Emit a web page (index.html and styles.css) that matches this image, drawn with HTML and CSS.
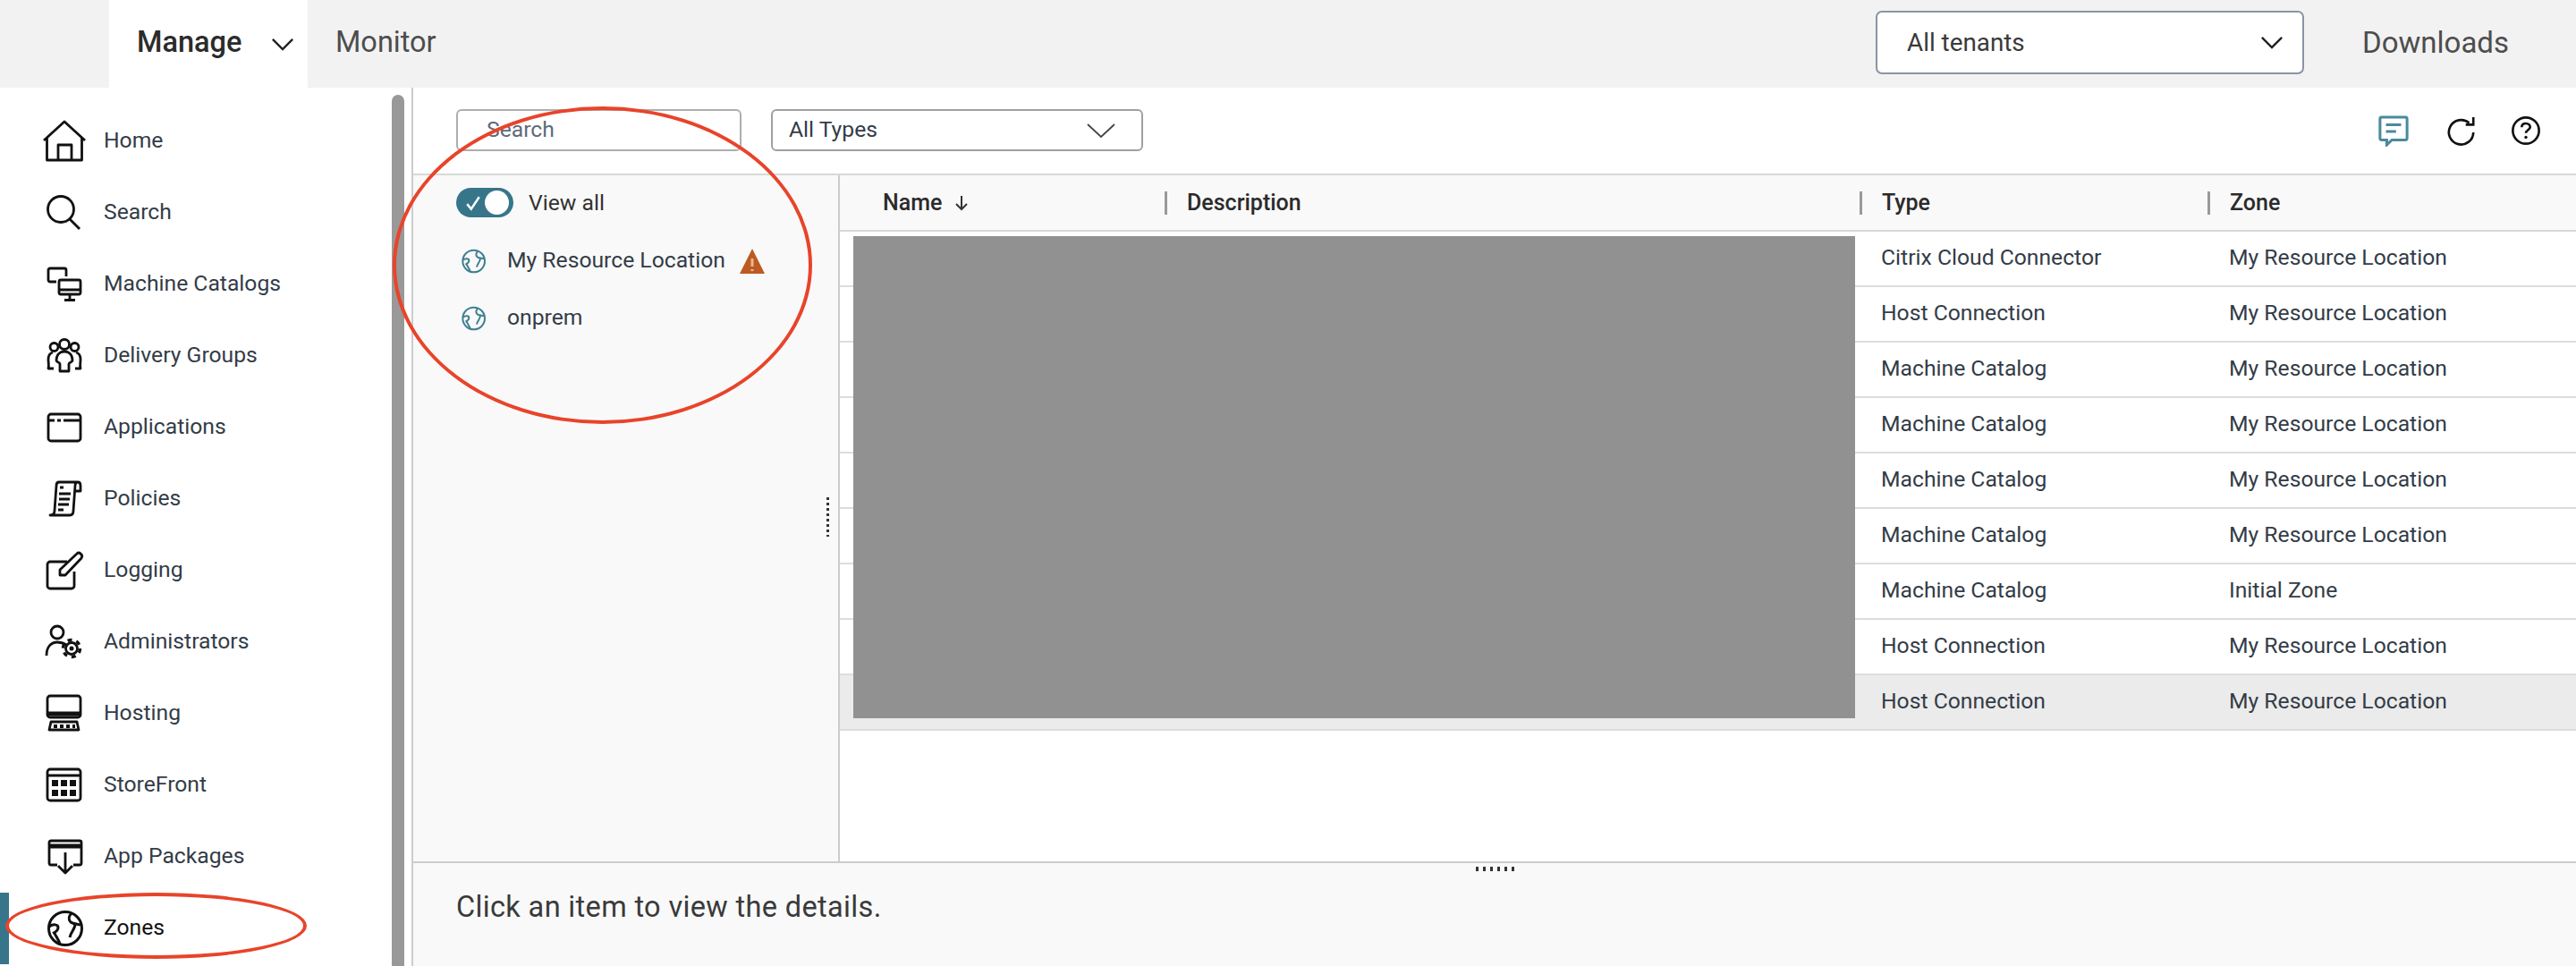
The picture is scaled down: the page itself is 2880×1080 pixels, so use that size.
FILE: index.html
```html
<!DOCTYPE html>
<html lang="en">
<head>
<meta charset="utf-8">
<title>Zones</title>
<link rel="stylesheet" href="styles.css">
</head>
<body>
<svg class="defs" width="0" height="0" aria-hidden="true">
  <symbol id="globe" viewBox="0 0 48 48">
    <circle cx="25" cy="24" r="18.500"/>
    <path d="M7 22C11 19 17 19 17 23C17 27 14 28 11 29.500"/>
    <path d="M13 29C14 33 18 36 19 42"/>
    <path d="M32 7C29 10 28 14 31 17C34 19 38 19 42 20"/>
    <path d="M36 19C36 25 31 28 30 34"/>
  </symbol>
</svg>
<header class="topbar">
  <nav class="tabs">
    <div class="tab tab-active">
      <span>Manage</span>
      <svg class="chev" viewBox="0 0 28 16"><path d="M2 2L14 14L26 2"/></svg>
    </div>
    <div class="tab tab-plain">Monitor</div>
  </nav>
  <div class="topright">
    <div class="tenant">
      <span>All tenants</span>
      <svg class="chev chev-tenant" viewBox="0 0 28 16"><path d="M2 2L14 14L26 2"/></svg>
    </div>
    <div class="downloads">Downloads</div>
  </div>
</header>
<div class="body">
  <aside class="sidebar">
    <ul class="navlist">
      <li class="navitem">
        <svg class="navicon" viewBox="0 0 48 48"><path d="M1 23L24 2L47 23"/><path d="M4.500 20V45H43.500V20"/><path d="M17 45V28H32V45"/></svg>
        <span>Home</span>
      </li>
      <li class="navitem">
        <svg class="navicon" viewBox="0 0 48 48"><circle cx="20" cy="20" r="14.500"/><path d="M30 31L41 42"/></svg>
        <span>Search</span>
      </li>
      <li class="navitem">
        <svg class="navicon" viewBox="0 0 48 48"><path d="M15 21H8a2 2 0 0 1-2-2V8a2 2 0 0 1 2-2H24a2 2 0 0 1 2 2V15"/><rect x="18" y="19" width="24" height="16" rx="2"/><path d="M18 30H42M30 35V41M24 41.500H36"/></svg>
        <span>Machine Catalogs</span>
      </li>
      <li class="navitem">
        <svg class="navicon" viewBox="0 0 48 48"><circle cx="24" cy="11" r="5.500"/><circle cx="12.500" cy="14" r="4.500"/><circle cx="35.500" cy="14" r="4.500"/><path d="M15 29C15 22 19 19 24 19C29 19 33 22 33 29C33 31 29 31 29 33V41H19V33C19 31 15 31 15 29Z"/><path d="M11 20C7 21 6 24 6 28C6 32 7 35 6 38H12"/><path d="M37 20C41 21 42 24 42 28C42 32 41 35 42 38H36"/></svg>
        <span>Delivery Groups</span>
      </li>
      <li class="navitem">
        <svg class="navicon" viewBox="0 0 48 48"><rect x="6" y="9" width="36" height="30" rx="3"/><path d="M6 16H13M16 16H20M23 16H42"/></svg>
        <span>Applications</span>
      </li>
      <li class="navitem">
        <svg class="navicon" viewBox="0 0 48 48"><path d="M39 5H18C16 5 15 7 15 9L13 37C13 40 11 42 8 42H30C33 42 34 40 34 37L36 9C36 7 37 5 39 5C41 5 42 7 42 9V15H36"/><path d="M19 11H23M18 18H31M18 24H30M17 30H29M17 36H23"/></svg>
        <span>Policies</span>
      </li>
      <li class="navitem">
        <svg class="navicon" viewBox="0 0 48 48"><path d="M27 14H8a3 3 0 0 0-3 3V41a3 3 0 0 0 3 3H32a3 3 0 0 0 3-3V25"/><path d="M19 29V23L38 5Q40 3 42 5Q45 7 43 10L25 29Z"/></svg>
        <span>Logging</span>
      </li>
      <li class="navitem">
        <svg class="navicon" viewBox="0 0 48 48"><circle cx="16" cy="13" r="7"/><path d="M4 39C4 28 10 24 16 24C19 24 23 25 26 27"/><circle cx="32" cy="31" r="6.500"/><circle class="gear" cx="32" cy="31" r="9.500"/><circle class="solid" cx="32" cy="31" r="2.500"/></svg>
        <span>Administrators</span>
      </li>
      <li class="navitem">
        <svg class="navicon" viewBox="0 0 48 48"><rect x="5" y="4" width="37" height="24" rx="3"/><path class="thick" d="M5 24H42"/><path d="M9 33H38L40 42H7Z"/><path class="dots" d="M12 38H36"/></svg>
        <span>Hosting</span>
      </li>
      <li class="navitem">
        <svg class="navicon" viewBox="0 0 48 48"><rect x="5" y="6" width="37" height="35" rx="3"/><path d="M5 13H42"/><path class="solid" d="M10 18h7v7h-7zM20 18h7v7h-7zM30 18h7v7h-7zM10 29h7v7h-7zM20 29h7v7h-7zM30 29h7v7h-7z"/></svg>
        <span>StoreFront</span>
      </li>
      <li class="navitem">
        <svg class="navicon" viewBox="0 0 48 48"><path d="M16 33H9a2 2 0 0 1-2-2V8a2 2 0 0 1 2-2H41a2 2 0 0 1 2 2V31a2 2 0 0 1-2 2H34"/><path class="thick" d="M7 12H43"/><path d="M25 19V42M17 34L25 42L33 34"/></svg>
        <span>App Packages</span>
      </li>
      <li class="navitem navitem-active">
        <svg class="navicon globe-icon"><use href="#globe"/></svg>
        <span>Zones</span>
      </li>
    </ul>
    <div class="scrollthumb"></div>
  </aside>
  <main class="content">
    <div class="toolbar">
      <div class="searchbox">Search</div>
      <div class="typeselect">
        <span>All Types</span>
        <svg class="chev chev-wide" viewBox="0 0 34 18"><path d="M2 2L17 16L32 2"/></svg>
      </div>
      <div class="tools">
        <svg class="tool" viewBox="0 0 36 36"><path class="teal" d="M4 2H32a2 2 0 0 1 2 2V27a2 2 0 0 1-2 2H16L10 35V29H4a2 2 0 0 1-2-2V4a2 2 0 0 1 2-2Z"/><path class="teal" d="M9 11H27M9 19H21"/></svg>
        <svg class="tool tool-refresh" viewBox="0 0 36 36"><path d="M27 9A14.500 14.500 0 1 0 32 20"/><path d="M32 2V11H23"/></svg>
        <svg class="tool" viewBox="0 0 36 36"><circle cx="18" cy="18" r="15.500"/><path d="M13 14C13 11 15 9.500 18 9.500C21 9.500 23 11.500 23 14C23 17 18 17.500 18 21"/><circle class="solid" cx="18" cy="26" r="1.800"/></svg>
      </div>
    </div>
    <div class="split">
      <section class="filters">
        <div class="viewall">
          <span class="toggle">
            <svg class="check" viewBox="0 0 16 16"><path d="M2 9L6 14L14 2"/></svg>
            <span class="knob"></span>
          </span>
          <span>View all</span>
        </div>
        <div class="zone">
          <svg class="zoneglobe"><use href="#globe"/></svg>
          <span class="zonename">My Resource Location</span>
          <svg class="warn" viewBox="0 0 28 28"><path class="warnfill" d="M14 0L28 28H0Z"/><path class="warnmark" d="M14 11V20M14 23V25"/></svg>
        </div>
        <div class="zone">
          <svg class="zoneglobe"><use href="#globe"/></svg>
          <span class="zonename">onprem</span>
        </div>
        <div class="vhandle"></div>
      </section>
      <section class="tablewrap">
        <div class="thead">
          <div class="th th-name">Name <svg class="sortarrow" viewBox="0 0 16 18"><path d="M8 1V16M2 10L8 16L14 10"/></svg></div>
          <div class="th th-sep">Description</div>
          <div class="th th-sep">Type</div>
          <div class="th th-sep">Zone</div>
        </div>
        <div class="tr"><div></div><div></div><div class="td">Citrix Cloud Connector</div><div class="td">My Resource Location</div></div>
        <div class="tr"><div></div><div></div><div class="td">Host Connection</div><div class="td">My Resource Location</div></div>
        <div class="tr"><div></div><div></div><div class="td">Machine Catalog</div><div class="td">My Resource Location</div></div>
        <div class="tr"><div></div><div></div><div class="td">Machine Catalog</div><div class="td">My Resource Location</div></div>
        <div class="tr"><div></div><div></div><div class="td">Machine Catalog</div><div class="td">My Resource Location</div></div>
        <div class="tr"><div></div><div></div><div class="td">Machine Catalog</div><div class="td">My Resource Location</div></div>
        <div class="tr"><div></div><div></div><div class="td">Machine Catalog</div><div class="td">Initial Zone</div></div>
        <div class="tr"><div></div><div></div><div class="td">Host Connection</div><div class="td">My Resource Location</div></div>
        <div class="tr tr-selected"><div></div><div></div><div class="td">Host Connection</div><div class="td">My Resource Location</div></div>
        <div class="redaction"></div>
      </section>
    </div>
    <div class="details">
      <div class="hhandle"></div>
      <p class="detailtext">Click an item to view the details.</p>
    </div>
  </main>
</div>
<div class="ring ring-filters"></div>
<div class="ring ring-zones"></div>
</body>
</html>
```
FILE: styles.css
```css
* { box-sizing: border-box; }
html, body { margin: 0; padding: 0; }
body {
  width: 2880px;
  height: 1080px;
  overflow: hidden;
  position: relative;
  display: flex;
  flex-direction: column;
  background: #fff;
  color: #333;
  font-family: Roboto, "Liberation Sans", sans-serif;
  font-size: 24.700px;
}
.defs { position: absolute; }
#globe circle, #globe path { fill: none; stroke: currentColor; stroke-width: 3; }

/* top bar */
.topbar {
  height: 98px;
  flex: none;
  background: #f2f2f2;
  display: flex;
  justify-content: space-between;
}
.tabs { display: flex; padding-left: 122px; }
.tab { display: flex; align-items: center; font-size: 32.500px; padding-bottom: 4px; }
.tab-active {
  width: 222px;
  padding-left: 31px;
  background: #fff;
  color: #2b2b2b;
  font-weight: 500;
  gap: 33px;
}
.tab-plain { padding-left: 31px; color: #4d4d4d; }
.chev { fill: none; stroke: #222; stroke-width: 2.600; }
.tab-active .chev { width: 26px; height: 15px; margin-top: 4px; }
.topright { display: flex; align-items: center; padding: 0 75px 3px 0; }
.tenant {
  width: 479px;
  height: 71px;
  background: #fff;
  border: 2px solid #8b93a3;
  border-radius: 7px;
  display: flex;
  align-items: center;
  justify-content: space-between;
  padding: 0 21px 0 33px;
  color: #3a3a3a;
  font-size: 27.800px;
}
.chev-tenant { width: 26px; height: 15px; }
.downloads { margin-left: 65px; font-size: 33px; color: #4d4d4d; }

/* layout */
.body { flex: 1; display: flex; min-height: 0; }
.sidebar {
  width: 462px;
  flex: none;
  position: relative;
  border-right: 2px solid #ccc;
  padding-top: 20px;
}
.navlist { list-style: none; margin: 0; padding: 0; }
.navitem {
  height: 80px;
  display: flex;
  align-items: center;
  gap: 20px;
  padding-left: 48px;
  color: #333c47;
}
.navitem span { margin-top: -3px; }
.navitem-active { color: #111; box-shadow: inset 10px 0 0 #37758a; }
.navicon {
  width: 48px;
  height: 48px;
  flex: none;
  fill: none;
  stroke: #111;
  stroke-width: 2.800;
  stroke-linejoin: round;
  color: #111;
}
.navicon .solid { fill: #111; stroke: none; }
.navicon .thick { stroke-width: 5; }
.navicon .dots { stroke-width: 4; stroke-dasharray: 4 3; }
.navicon .gear { stroke-width: 3.500; stroke-dasharray: 5 5; }
.scrollthumb {
  position: absolute;
  left: 438px;
  top: 8px;
  bottom: 0;
  width: 14px;
  background: #999;
  border-radius: 7px 7px 0 0;
}
.content { flex: 1; min-width: 0; display: flex; flex-direction: column; }

/* toolbar */
.toolbar {
  height: 98px;
  flex: none;
  display: flex;
  align-items: flex-start;
  padding: 24px 39px 0 48px;
  border-bottom: 2px solid #d8d8d8;
}
.searchbox {
  width: 319px;
  height: 47px;
  border: 2px solid #aeaeae;
  border-radius: 6px;
  padding-left: 32px;
  line-height: 41px;
  color: #5f6b78;
}
.typeselect {
  width: 416px;
  height: 47px;
  margin-left: 33px;
  border: 2px solid #a0a0a0;
  border-radius: 6px;
  padding: 0 28px 0 18px;
  display: flex;
  align-items: center;
  justify-content: space-between;
  color: #333c47;
}
.typeselect span { margin-top: -3px; }
.chev-wide { width: 34px; height: 18px; stroke: #444; stroke-width: 1.800; }
.tools { margin-left: auto; display: flex; align-items: center; gap: 40px; padding-top: 6px; }
.tool { width: 34px; height: 36px; fill: none; stroke: #111; stroke-width: 2.800; }
.tool-refresh { margin-left: 2px; margin-right: -2px; }
.tool .solid { fill: #111; stroke: none; }
.tool .teal { stroke: #4a8a9c; stroke-width: 3.200; }

/* split */
.split { flex: 1; display: flex; min-height: 0; }
.filters {
  width: 477px;
  flex: none;
  position: relative;
  background: #f9f9f9;
  border-right: 2px solid #ccc;
  padding: 14px 0 0 48px;
}
.viewall { height: 33px; display: flex; align-items: center; gap: 17px; color: #333; }
.toggle {
  width: 64px;
  height: 33px;
  border-radius: 17px;
  background: #37758a;
  display: flex;
  align-items: center;
  justify-content: space-between;
  padding: 0 5px 0 10px;
}
.check { width: 18px; height: 18px; fill: none; stroke: #fff; stroke-width: 2.200; }
.knob { width: 27px; height: 27px; border-radius: 50%; background: #fff; }
.zone { display: flex; align-items: center; height: 64px; color: #333c47; }
.zonename { margin-top: -3px; }
.viewall + .zone { margin-top: 17px; }
.zoneglobe { width: 32px; height: 32px; flex: none; margin-left: 3px; color: #3f7f92; margin-right: 22px; }
.warn { width: 28px; height: 28px; margin-left: 16px; }
.warnfill { fill: #bd5a22; }
.warnmark { fill: none; stroke: #e8b79b; stroke-width: 3; }
.vhandle {
  position: absolute;
  left: 462px;
  top: 360px;
  width: 3px;
  height: 44px;
  background: repeating-linear-gradient(to bottom, #333 0 3px, transparent 3px 6px);
}

/* table */
.tablewrap { flex: 1; min-width: 0; position: relative; }
.thead, .tr { display: grid; grid-template-columns: 363px 777px 389px 1fr; }
.thead {
  height: 63px;
  background: #f9f9f9;
  border-bottom: 2px solid #d8d8d8;
  align-items: center;
}
.th {
  font-weight: 500;
  font-size: 25px;
  color: #2b2b2b;
  height: 26px;
  line-height: 26px;
  display: flex;
  align-items: center;
}
.th-name { padding-left: 48px; gap: 14px; }
.th-sep { padding-left: 22px; border-left: 3px solid #999; }
.sortarrow { width: 16px; height: 18px; fill: none; stroke: #333; stroke-width: 2; }
.tr {
  height: 62px;
  border-bottom: 2px solid #ddd;
  align-items: center;
  color: #333c47;
}
.td { padding: 0 0 3px 24px; }
.tr-selected { background: #ebebeb; }
.redaction {
  position: absolute;
  left: 15px;
  top: 68px;
  width: 1120px;
  height: 539px;
  background: #919191;
}

/* details */
.details {
  height: 117px;
  flex: none;
  position: relative;
  background: #f9f9f9;
  border-top: 2px solid #ccc;
  padding: 30px 0 0 48px;
}
.detailtext { margin: 0; font-size: 32.500px; letter-spacing: .35px; color: #3a3a3a; }
.hhandle {
  position: absolute;
  left: 1188px;
  top: 4px;
  width: 45px;
  height: 5px;
  background: repeating-linear-gradient(to right, #333 0 3px, transparent 3px 8px);
}

/* annotation rings */
.ring {
  position: absolute;
  border: 4px solid #e8442a;
  border-radius: 50%;
}
.ring-filters { left: 439px; top: 119px; width: 469px; height: 355px; }
.ring-zones { left: 6px; top: 998px; width: 337px; height: 74px; }
```
